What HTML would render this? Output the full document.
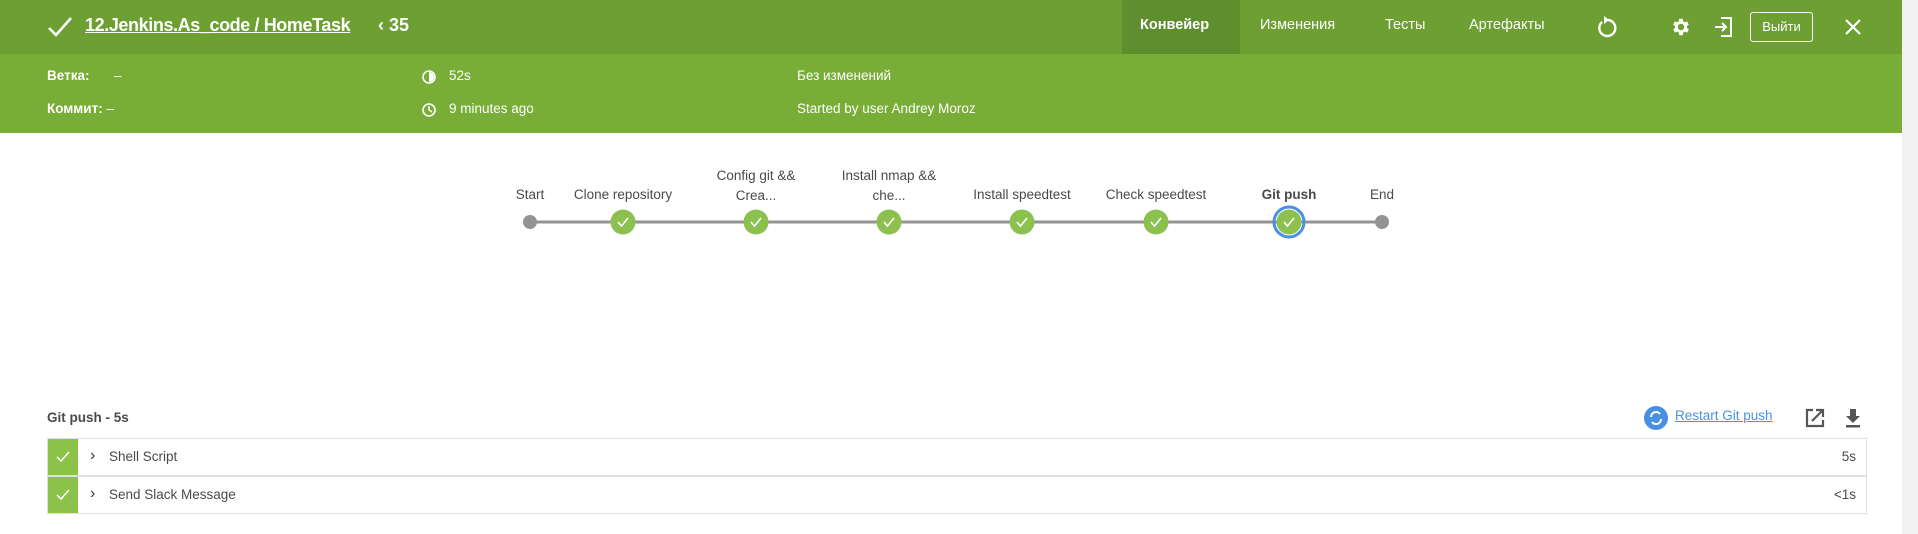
<!DOCTYPE html><html><head><meta charset="utf-8"><style>
*{margin:0;padding:0;box-sizing:border-box}
body{width:1918px;height:534px;overflow:hidden;background:#fff;font-family:"Liberation Sans",sans-serif;position:relative;color:#4a4a4a}
.a{position:absolute;white-space:nowrap}
#top{position:absolute;left:0;top:0;width:1902px;height:54px;background:#6d9f33}
#info{position:absolute;left:0;top:54px;width:1902px;height:79px;background:#78ae37}
#sb{position:absolute;left:1902px;top:0;width:16px;height:534px;background:#f1f1f1}
.w{color:#fff}
.tab{top:17px;font-size:14.5px;color:#fff}
.lbl{font-size:13.5px;color:#4a4a4a;text-align:center;line-height:20px;transform:translateX(-50%)}
.row{position:absolute;left:47px;width:1820px;height:38px;border:1px solid #e0e0e0;background:#fff}
.gs{position:absolute;left:0;top:0;width:30px;height:100%;background:#8bc34a}
</style></head><body>
<div id="top"></div><div id="info"></div><div id="sb"></div>
<svg class="a" style="left:46px;top:15px" width="28" height="24" viewBox="0 0 28 24"><path d="M3 13 L10 20 L25 3" stroke="#fff" stroke-width="2.6" fill="none"/></svg>
<div class="a w" style="left:85px;top:15px;font-size:18px;font-weight:bold;text-decoration:underline;letter-spacing:-0.4px">12.Jenkins.As_code / HomeTask</div>
<div class="a w" style="left:378px;top:15px;font-size:18px;font-weight:bold">‹ 35</div>
<div class="a" style="left:1122px;top:0;width:118px;height:54px;background:#5f8e2e"></div>
<div class="a tab" style="left:1140px;font-weight:bold">Конвейер</div>
<div class="a tab" style="left:1260px">Изменения</div>
<div class="a tab" style="left:1385px">Тесты</div>
<div class="a tab" style="left:1469px">Артефакты</div>
<svg class="a" style="left:1594px;top:14px" width="24" height="26" viewBox="0 0 24 26"><path d="M8 8 A8 8 0 1 0 14 6" stroke="#fff" stroke-width="2.4" fill="none"/><path d="M10 2 L15 6 L10 10Z" fill="#fff"/></svg>
<svg class="a" style="left:1670px;top:16px" width="22" height="22" viewBox="0 0 24 24"><path fill="#fff" d="M19.4 13a7.5 7.5 0 0 0 0-2l2.1-1.6-2-3.5-2.5 1a7 7 0 0 0-1.7-1L15 3h-4l-.4 2.9a7 7 0 0 0-1.7 1l-2.5-1-2 3.5L6.6 11a7.5 7.5 0 0 0 0 2l-2.1 1.6 2 3.5 2.5-1a7 7 0 0 0 1.7 1L11 21h4l.4-2.9a7 7 0 0 0 1.7-1l2.5 1 2-3.5zM13 15.5a3.5 3.5 0 1 1 0-7 3.5 3.5 0 0 1 0 7z" transform="translate(-1 0)"/></svg>
<svg class="a" style="left:1712px;top:16px" width="22" height="22" viewBox="0 0 22 22"><path d="M9 2H19V20H9" stroke="#fff" stroke-width="2" fill="none"/><path d="M3 11H14M10 7L14 11L10 15" stroke="#fff" stroke-width="2" fill="none"/></svg>
<div class="a" style="left:1750px;top:12px;width:63px;height:30px;border:1px solid #fff;border-radius:3px;color:#fff;font-size:13px;text-align:center;line-height:28px">Выйти</div>
<svg class="a" style="left:1844px;top:18px" width="18" height="18"><path d="M2 2L16 16M16 2L2 16" stroke="#fff" stroke-width="2.2"/></svg>
<div class="a w" style="left:47px;top:68px;font-size:13.5px;font-weight:bold">Ветка:</div>
<div class="a w" style="left:114px;top:68px;font-size:13.5px">–</div>
<div class="a w" style="left:47px;top:101px;font-size:13.5px;font-weight:bold">Коммит: <span style="font-weight:normal">–</span></div>
<svg class="a" style="left:421px;top:69px" width="16" height="16"><circle cx="8" cy="8" r="6" stroke="#fff" stroke-width="1.6" fill="none"/><path d="M8 8V3A5 5 0 0 1 8 13Z" fill="#fff"/></svg>
<div class="a w" style="left:449px;top:68px;font-size:13.5px">52s</div>
<svg class="a" style="left:421px;top:102px" width="16" height="16"><circle cx="8" cy="8" r="6" stroke="#fff" stroke-width="1.6" fill="none"/><path d="M8 4V8L11 10" stroke="#fff" stroke-width="1.5" fill="none"/></svg>
<div class="a w" style="left:449px;top:101px;font-size:13.5px">9 minutes ago</div>
<div class="a w" style="left:797px;top:68px;font-size:13.5px">Без изменений</div>
<div class="a w" style="left:797px;top:101px;font-size:13.5px">Started by user Andrey Moroz</div>
<svg class="a" style="left:0;top:0" width="1900" height="260">
<line x1="530" y1="222" x2="1382" y2="222" stroke="#949393" stroke-width="3"/>
<circle cx="530" cy="222" r="7" fill="#949393"/><circle cx="1382" cy="222" r="7" fill="#949393"/>
<circle cx="1289" cy="222" r="15" fill="none" stroke="#4a90e2" stroke-width="3"/>
<g fill="#8cc04f">
<circle cx="623" cy="222" r="12.5"/><circle cx="756" cy="222" r="12.5"/><circle cx="889" cy="222" r="12.5"/><circle cx="1022" cy="222" r="12.5"/><circle cx="1156" cy="222" r="12.5"/><circle cx="1289" cy="222" r="12.5"/></g>
<g stroke="#fff" stroke-width="1.6" fill="none">
<path d="M618 222l3.5 4 6.5-8"/><path d="M751 222l3.5 4 6.5-8"/><path d="M884 222l3.5 4 6.5-8"/><path d="M1017 222l3.5 4 6.5-8"/><path d="M1151 222l3.5 4 6.5-8"/><path d="M1284 222l3.5 4 6.5-8"/></g>
</svg>
<div class="a lbl" style="left:530px;top:185px">Start</div>
<div class="a lbl" style="left:623px;top:185px">Clone repository</div>
<div class="a lbl" style="left:756px;top:166px">Config git &amp;&amp;<br>Crea...</div>
<div class="a lbl" style="left:889px;top:166px">Install nmap &amp;&amp;<br>che...</div>
<div class="a lbl" style="left:1022px;top:185px">Install speedtest</div>
<div class="a lbl" style="left:1156px;top:185px">Check speedtest</div>
<div class="a lbl" style="left:1289px;top:185px;font-weight:bold">Git push</div>
<div class="a lbl" style="left:1382px;top:185px">End</div>
<div class="a" style="left:47px;top:410px;font-size:13.5px;font-weight:bold;color:#4a4a4a">Git push - 5s</div>
<svg class="a" style="left:1644px;top:406px" width="24" height="24"><circle cx="12" cy="12" r="12" fill="#4a90e2"/><path d="M7 11a5 5 0 0 1 9-3M17 13a5 5 0 0 1-9 3" stroke="#fff" stroke-width="2" fill="none"/></svg>
<div class="a" style="left:1675px;top:408px;font-size:13.5px;color:#4a90e2;text-decoration:underline">Restart Git push</div>
<svg class="a" style="left:1804px;top:407px" width="22" height="22"><path d="M9 3H3V19H19V13" stroke="#555" stroke-width="2.2" fill="none"/><path d="M8 14L18 4M12 3H19V10" stroke="#555" stroke-width="2.2" fill="none"/></svg>
<svg class="a" style="left:1843px;top:407px" width="20" height="22"><path d="M7 2H13V9H17L10 16L3 9H7Z" fill="#555"/><rect x="3" y="18" width="14" height="2.5" fill="#555"/></svg>
<div class="row" style="top:438px"><div class="gs"></div>
<svg class="a" style="left:8px;top:12px" width="14" height="12"><path d="M1 6l4 4 8-9" stroke="#fff" stroke-width="1.5" fill="none"/></svg>
<div class="a" style="left:42px;top:8px;font-size:16px;color:#333">›</div>
<div class="a" style="left:61px;top:10px;font-size:13.5px;color:#4a4a4a">Shell Script</div>
<div class="a" style="right:10px;top:10px;font-size:13.5px">5s</div></div>
<div class="row" style="top:476px"><div class="gs"></div>
<svg class="a" style="left:8px;top:12px" width="14" height="12"><path d="M1 6l4 4 8-9" stroke="#fff" stroke-width="1.5" fill="none"/></svg>
<div class="a" style="left:42px;top:8px;font-size:16px;color:#333">›</div>
<div class="a" style="left:61px;top:10px;font-size:13.5px;color:#4a4a4a">Send Slack Message</div>
<div class="a" style="right:10px;top:10px;font-size:13.5px">&lt;1s</div></div>
</body></html>
